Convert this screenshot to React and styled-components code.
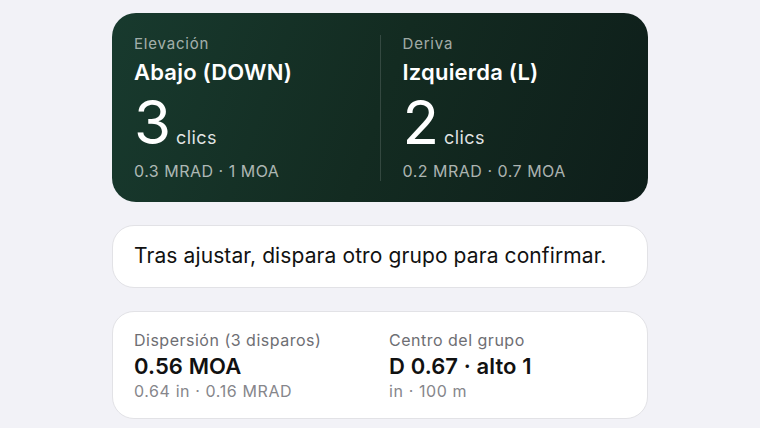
import React from 'react';
import styled, { createGlobalStyle } from 'styled-components';

const GlobalStyle = createGlobalStyle`
  html, body {
    margin: 0;
    padding: 0;
    background: #f2f2f7;
    font-family: Inter, "Noto Sans", "Liberation Sans", sans-serif;
    -webkit-font-smoothing: antialiased;
  }
`;

const Page = styled.div`
  display: flex;
  flex-direction: column;
  gap: 23px;
  width: 536px;
  padding: 13px 0 0 112px;
`;

const DarkCard = styled.div`
  display: grid;
  grid-template-columns: 1fr 1px 1fr;
  column-gap: 22px;
  padding: 22px 22px 21px;
  border-radius: 24px;
  background: linear-gradient(110deg, #183a2e 0%, #132b21 50%, #0e1e1a 100%);
  color: #fff;
`;

const Divider = styled.div`
  background: rgba(255, 255, 255, 0.14);
`;

const Adjust = styled.div`
  display: flex;
  flex-direction: column;
`;

const Label = styled.div`
  font-size: 15px;
  line-height: 18px;
  letter-spacing: 0.8px;
  color: rgba(255, 255, 255, 0.62);
`;

const Direction = styled.div`
  margin-top: 5px;
  font-size: 22px;
  line-height: 28px;
  font-weight: 600;
  letter-spacing: 0.2px;
`;

const Clicks = styled.div`
  display: flex;
  align-items: baseline;
  gap: 6px;
  margin-top: 5px;
  height: 62px;
`;

const Big = styled.span`
  font-size: 60px;
  line-height: 62px;
  font-weight: 400;
  letter-spacing: -1px;
`;

const Unit = styled.span`
  font-size: 18px;
  letter-spacing: 0.4px;
  color: rgba(255, 255, 255, 0.88);
`;

const Sub = styled.div`
  margin-top: 8px;
  font-size: 16px;
  line-height: 20px;
  letter-spacing: 0.5px;
  color: rgba(255, 255, 255, 0.66);
`;

const Card = styled.div`
  background: #fff;
  border: 1px solid #e2e2e6;
  border-radius: 22px;
  padding: ${(p) => p.$pad || '18px 21px 19px'};
`;

const Note = styled.div`
  font-size: 21px;
  line-height: 24px;
  color: #111;
  letter-spacing: 0.1px;
`;

const Stats = styled.div`
  display: grid;
  grid-template-columns: 1fr 1fr;
  column-gap: 18px;
`;

const Stat = styled.div`
  display: flex;
  flex-direction: column;
`;

const StatLabel = styled.div`
  font-size: 16px;
  line-height: 20px;
  letter-spacing: 0.5px;
  color: #6e6e73;
`;

const StatValue = styled.div`
  margin-top: 2px;
  font-size: 22px;
  line-height: 28px;
  font-weight: 600;
  color: #111;
  letter-spacing: 0.1px;
`;

const StatSub = styled.div`
  margin-top: 1px;
  font-size: 16px;
  line-height: 20px;
  letter-spacing: 0.6px;
  color: #86868b;
`;

const adjustments = [
  { label: 'Elevación', dir: 'Abajo (DOWN)', clicks: 3, sub: '0.3 MRAD · 1 MOA' },
  { label: 'Deriva', dir: 'Izquierda (L)', clicks: 2, sub: '0.2 MRAD · 0.7 MOA' },
];

const AdjustBlock = ({ a }) => (
  <Adjust>
    <Label>{a.label}</Label>
    <Direction>{a.dir}</Direction>
    <Clicks>
      <Big>{a.clicks}</Big>
      <Unit>clics</Unit>
    </Clicks>
    <Sub>{a.sub}</Sub>
  </Adjust>
);

const App = () => {
  return (
    <>
      <GlobalStyle />
      <Page>
        <DarkCard>
          <AdjustBlock a={adjustments[0]} />
          <Divider />
          <AdjustBlock a={adjustments[1]} />
        </DarkCard>

        <Card>
          <Note>Tras ajustar, dispara otro grupo para confirmar.</Note>
        </Card>

        <Card $pad="18px 21px 17px">
          <Stats>
            <Stat>
              <StatLabel>Dispersión (3 disparos)</StatLabel>
              <StatValue>0.56 MOA</StatValue>
              <StatSub>0.64 in · 0.16 MRAD</StatSub>
            </Stat>
            <Stat>
              <StatLabel>Centro del grupo</StatLabel>
              <StatValue>D 0.67 · alto 1</StatValue>
              <StatSub>in · 100 m</StatSub>
            </Stat>
          </Stats>
        </Card>
      </Page>
    </>
  );
};

export default App;
